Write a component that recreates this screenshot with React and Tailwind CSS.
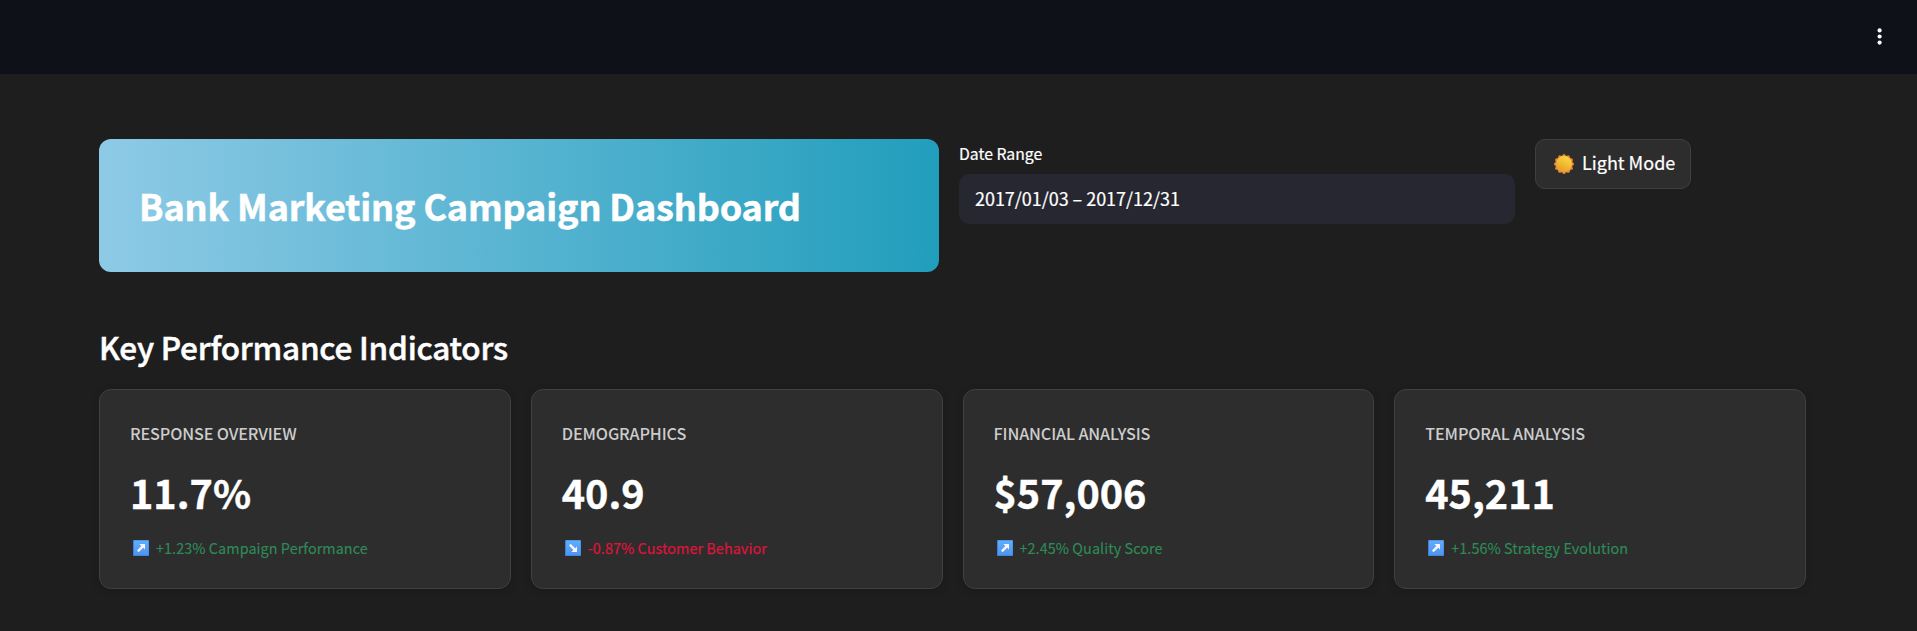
const kpis = [
  { title: 'RESPONSE OVERVIEW', value: '11.7%', delta: '+1.23% Campaign Performance', up: true },
  { title: 'DEMOGRAPHICS', value: '40.9', delta: '-0.87% Customer Behavior', up: false },
  { title: 'FINANCIAL ANALYSIS', value: '$57,006', delta: '+2.45% Quality Score', up: true },
  { title: 'TEMPORAL ANALYSIS', value: '45,211', delta: '+1.56% Strategy Evolution', up: true },
];

function TrendIcon({ up }) {
  return (
    <svg className="size-4 shrink-0" viewBox="0 0 16 16">
      <defs>
        <linearGradient id="tile" x1="0" y1="0" x2="0" y2="1">
          <stop offset="0" stopColor="#60aefa" />
          <stop offset="1" stopColor="#4f93f0" />
        </linearGradient>
      </defs>
      <rect width="16" height="16" rx="0.8" fill="#4080dc" />
      <rect x="1" y="0.6" width="14.6" height="14.6" rx="0.5" fill="url(#tile)" />
      <g transform={up ? undefined : 'matrix(1 0 0 -1 0 16)'}>
        <path d="M6.4 4H12v5.4L10.2 7.7 5.6 12.2 4 10.6 8.3 6z" fill="#f6f3ff" />
      </g>
    </svg>
  );
}

function SunIcon() {
  const rays = Array.from({ length: 12 }, (_, i) => {
    const a = (i * Math.PI) / 6;
    return [10 + 8.5 * Math.sin(a), 10 - 8.5 * Math.cos(a)];
  });
  return (
    <svg className="size-5 shrink-0" viewBox="0 0 20 20">
      <defs>
        <linearGradient id="sun" x1="0.75" y1="0.1" x2="0.3" y2="0.95">
          <stop offset="0" stopColor="#ffd43d" />
          <stop offset="1" stopColor="#e2a02c" />
        </linearGradient>
      </defs>
      {rays.map(([x, y]) => (
        <circle key={`${x}-${y}`} cx={x} cy={y} r="1.5" fill="#f08537" />
      ))}
      <circle cx="10" cy="10" r="8.8" fill="#f08a35" />
      <circle cx="10" cy="10" r="7.9" fill="url(#sun)" />
    </svg>
  );
}

function KpiCard({ title, value, delta, up }) {
  return (
    <div className="h-[200px] rounded-xl border border-[#404040] bg-[#2d2d2d] px-[30px] pt-[30px] shadow-[0_2px_8px_rgba(0,0,0,0.15)]">
      <div className="h-[27px] text-[16.2px] leading-[27px] font-medium tracking-[-0.13px] text-[#cccccc]">{title}</div>
      <div className="mt-[18px] h-[53px] text-[39.6px] leading-[53px] font-bold text-white [-webkit-text-stroke:0.4px_white]">{value}</div>
      <div
        className={`mt-[18px] flex h-6 items-center gap-[7px] pl-[3px] text-[14.4px] leading-6 tracking-[0.06px] ${
          up ? 'text-[#2e8b57] [-webkit-text-stroke:0.15px_#2e8b57]' : 'text-[#dc143c] [-webkit-text-stroke:0.25px_#dc143c]'
        }`}
      >
        <TrendIcon up={up} />
        <span className="whitespace-nowrap">{delta}</span>
      </div>
    </div>
  );
}

export default function App() {
  return (
    <div className="h-[631px] overflow-hidden bg-[#1e1e1e] font-['Noto_Sans_CJK_SC',sans-serif] text-white">
      <header className="flex h-[74px] items-center justify-end bg-[#0e1117] pr-[27px]">
        <button className="flex size-5 items-center justify-center" aria-label="Menu">
          <svg className="h-[18px] w-[6px]" viewBox="0 0 6 18" fill="#fff">
            <circle cx="2.6" cy="2.4" r="2.1" />
            <circle cx="2.6" cy="8.5" r="2.1" />
            <circle cx="2.6" cy="14.6" r="2.1" />
          </svg>
        </button>
      </header>
      <main className="w-[1806px] pt-[65px] pl-[99px]">
        <section className="flex items-start gap-5">
          <div className="flex h-[133px] w-[840px] items-center rounded-xl bg-[linear-gradient(90deg,#8ecae6,#219ebc)] pb-[2px] pl-10">
            <h1 className="text-[36px] leading-[48px] font-bold tracking-[-0.14px] whitespace-nowrap [-webkit-text-stroke:0.5px_white]">Bank Marketing Campaign Dashboard</h1>
          </div>
          <div className="w-[556px]">
            <label className="block h-[35px] pt-[2px] text-[15.75px] leading-[26px] [-webkit-text-stroke:0.2px_white]">Date Range</label>
            <div className="flex h-[50px] items-center rounded-[10px] bg-[#262730] px-4 pb-[3px] text-[18px] leading-6 tracking-[-0.04px] [-webkit-text-stroke:0.2px_white]">2017/01/03 – 2017/12/31</div>
          </div>
          <button className="flex h-[50px] w-[156px] items-center gap-2 rounded-[10px] border border-[#404040] bg-[#2d2d2d] pl-[18px] text-[18px] leading-6 whitespace-nowrap [-webkit-text-stroke:0.2px_white]">
            <SunIcon />
            <span className="pb-[4px]">Light Mode</span>
          </button>
        </section>
        <h2 className="mt-[50px] h-[67px] text-[31.5px] leading-[48px] font-medium tracking-[-0.22px] [-webkit-text-stroke:0.5px_white]">Key Performance Indicators</h2>
        <section className="grid grid-cols-4 gap-5">
          {kpis.map((k) => (
            <KpiCard key={k.title} {...k} />
          ))}
        </section>
      </main>
    </div>
  );
}
